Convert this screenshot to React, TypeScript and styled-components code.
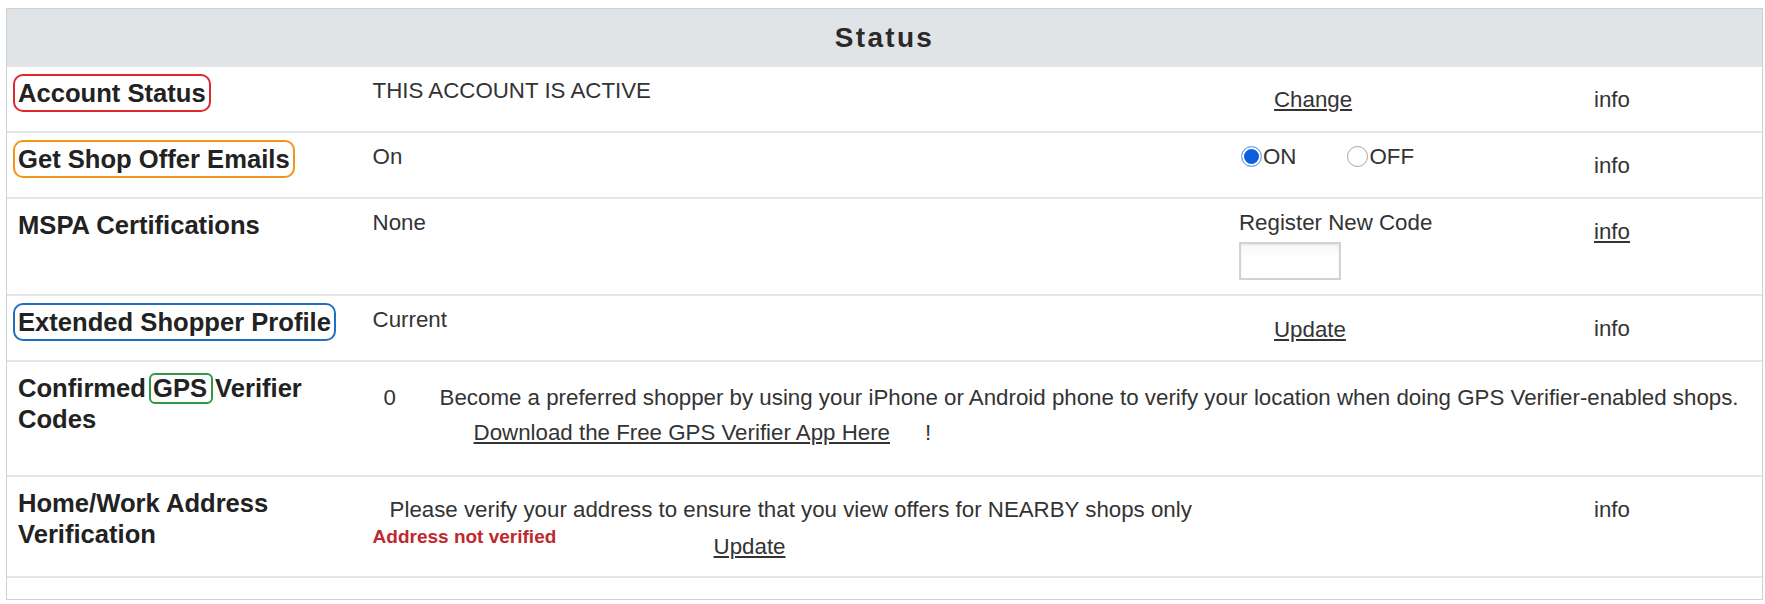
import React from 'react';
import styled, { createGlobalStyle } from 'styled-components';

const Global = createGlobalStyle`
  html, body { margin: 0; padding: 0; background: #ffffff; }
  body {
    font-family: "Liberation Sans", Arial, Helvetica, sans-serif;
    color: #333333;
  }
`;

const Page = styled.div`
  padding: 8px 2px 4px 6px;
`;

const Panel = styled.section`
  border: 1px solid #cdd1d4;
`;

const Header = styled.h2`
  margin: 0;
  height: 58px;
  display: flex;
  align-items: center;
  justify-content: center;
  background: #e1e4e7;
  font-size: 28px;
  font-weight: 700;
  letter-spacing: 2.3px;
  color: #2a2a2a;
`;

const Row = styled.div<{ $h: number; $last?: boolean }>`
  display: grid;
  grid-template-columns: 355px 867px 355px 1fr;
  box-sizing: border-box;
  height: ${(p) => p.$h}px;
  border-bottom: ${(p) => (p.$last ? 'none' : '2px solid #e3e7ea')};
`;

const LabelCell = styled.div`
  padding: 11px 8px 0 11px;
  font-size: 25.6px;
  font-weight: 700;
  line-height: 31px;
  color: #222222;
`;

const Tag = styled.span<{ $color: string }>`
  outline: 2px solid ${(p) => p.$color};
  outline-offset: 3px;
  border-radius: 5px;
`;

const InlineTag = styled.span<{ $color: string }>`
  display: inline-block;
  line-height: 27px;
  border: 2px solid ${(p) => p.$color};
  border-radius: 6px;
  padding: 0 4px 0 2px;
  margin: 0 2px 0 3px;
`;

const ValueCell = styled.div<{ $span?: number }>`
  grid-column: span ${(p) => p.$span ?? 1};
  padding: 11px 10px 0 10.6px;
  font-size: 22.3px;
  line-height: 25px;
`;

const ActionCell = styled.div<{ $pad?: number }>`
  padding: ${(p) => p.$pad ?? 20}px 10px 0;
  font-size: 22.3px;
  line-height: 25px;
`;

const InfoCell = styled.div`
  padding: 20px 10px 0;
  font-size: 22.3px;
  line-height: 25px;
`;

const Link = styled.a<{ $indent?: number }>`
  color: #333333;
  text-decoration: underline;
  cursor: pointer;
  margin-left: ${(p) => p.$indent ?? 0}px;
`;

const RadioGroup = styled.div`
  display: flex;
  align-items: center;
  gap: 49px;
`;

const RadioOption = styled.label`
  display: inline-flex;
  align-items: center;
  height: 25px;
`;

const Radio = styled.input.attrs({ type: 'radio' })`
  appearance: none;
  -webkit-appearance: none;
  margin: 0 1px 0 2px;
  width: 21px;
  height: 21px;
  border-radius: 50%;
  box-sizing: border-box;
  border: 1.5px solid #a3a3a3;
  background: #ffffff;
  &:checked {
    border: 1.5px solid #7ea9f1;
    background: #0b5fdc;
    box-shadow: inset 0 0 0 2px #ffffff;
  }
`;

const CodeInput = styled.input`
  display: block;
  margin-top: 7px;
  width: 102px;
  height: 38px;
  box-sizing: border-box;
  border: 2px solid #d0d2d4;
  background: linear-gradient(#f7f7f7, #ffffff 40%);
  box-shadow: inset 0 1px 2px rgba(0, 0, 0, 0.08);
`;

const GpsGrid = styled.div`
  display: grid;
  grid-template-columns: 67px 1fr;
  margin-top: 11.5px;
  row-gap: 10px;
`;

const Count = styled.span`
  padding-left: 11px;
`;

const LinkLine = styled.div`
  grid-column: 2;
  padding-left: 34px;
  display: flex;
`;

const Bang = styled.span`
  margin-left: 35px;
`;

const Notice = styled.div`
  margin-top: 8.5px;
  padding-left: 17px;
`;

const WarningRow = styled.div`
  display: grid;
  grid-template-columns: 341px auto;
  align-items: start;
  margin-top: 4.5px;
`;

const Warning = styled.span`
  color: #c0282e;
  font-size: 19px;
  font-weight: 700;
  line-height: 22px;
`;

const WarningAction = styled.div`
  margin-top: 7.5px;
`;

export default function App() {
  return (
    <Page>
      <Global />
      <Panel>
        <Header>Status</Header>

        <Row $h={66}>
          <LabelCell>
            <Tag $color="#e0262e">Account Status</Tag>
          </LabelCell>
          <ValueCell>THIS ACCOUNT IS ACTIVE</ValueCell>
          <ActionCell>
            <Link $indent={35}>Change</Link>
          </ActionCell>
          <InfoCell>info</InfoCell>
        </Row>

        <Row $h={66}>
          <LabelCell>
            <Tag $color="#f2951a">Get Shop Offer Emails</Tag>
          </LabelCell>
          <ValueCell>On</ValueCell>
          <ActionCell $pad={11}>
            <RadioGroup>
              <RadioOption>
                <Radio name="offers" defaultChecked />
                ON
              </RadioOption>
              <RadioOption>
                <Radio name="offers" />
                OFF
              </RadioOption>
            </RadioGroup>
          </ActionCell>
          <InfoCell>info</InfoCell>
        </Row>

        <Row $h={97}>
          <LabelCell>MSPA Certifications</LabelCell>
          <ValueCell>None</ValueCell>
          <ActionCell $pad={11}>
            Register New Code
            <CodeInput type="text" />
          </ActionCell>
          <InfoCell>
            <Link>info</Link>
          </InfoCell>
        </Row>

        <Row $h={66}>
          <LabelCell>
            <Tag $color="#1f6fc4">Extended Shopper Profile</Tag>
          </LabelCell>
          <ValueCell>Current</ValueCell>
          <ActionCell $pad={21}>
            <Link $indent={35}>Update</Link>
          </ActionCell>
          <InfoCell>info</InfoCell>
        </Row>

        <Row $h={115}>
          <LabelCell>
            {'Confirmed'}
            <InlineTag $color="#2e9a40">GPS</InlineTag>
            {'Verifier '}
            {'Codes'}
          </LabelCell>
          <ValueCell $span={3}>
            <GpsGrid>
              <Count>0</Count>
              <span>
                Become a preferred shopper by using your iPhone or Android phone to verify your
                location when doing GPS Verifier-enabled shops.
              </span>
              <LinkLine>
                <Link>Download the Free GPS Verifier App Here</Link>
                <Bang>!</Bang>
              </LinkLine>
            </GpsGrid>
          </ValueCell>
        </Row>

        <Row $h={101}>
          <LabelCell>
            {'Home/Work Address '}
            {'Verification'}
          </LabelCell>
          <ValueCell $span={2}>
            <Notice>
              Please verify your address to ensure that you view offers for NEARBY shops only
            </Notice>
            <WarningRow>
              <Warning>Address not verified</Warning>
              <WarningAction>
                <Link>Update</Link>
              </WarningAction>
            </WarningRow>
          </ValueCell>
          <InfoCell>info</InfoCell>
        </Row>

        <Row $h={21} $last />
      </Panel>
    </Page>
  );
}
